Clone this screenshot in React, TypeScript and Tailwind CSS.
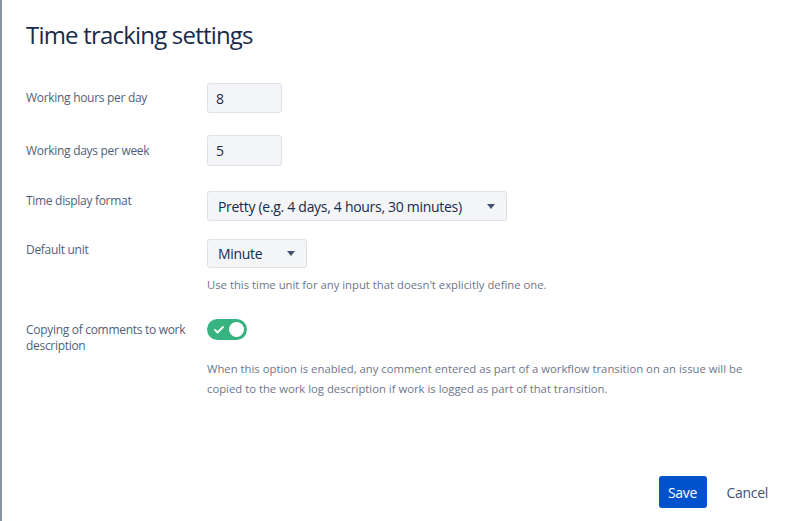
import { useState } from 'react';

const font = { fontFamily: '"Open Sans", "Noto Sans", sans-serif' };

function Caret() {
  return (
    <svg width="8" height="5" viewBox="0 0 8 5" className="shrink-0">
      <path d="M0 0h8L4 5z" fill="#42526e" />
    </svg>
  );
}

export default function App() {
  const [copyComments, setCopyComments] = useState(true);

  return (
    <div className="w-[801px] h-[521px] flex bg-[#8993a4] overflow-hidden" style={font}>
      <div className="ml-[2px] flex-1 bg-white flex flex-col pl-6 pr-[21px]">
        <h1 className="mt-[19px] text-[24px] leading-[32px] tracking-[-0.8px] text-[#172b4d]">Time tracking settings</h1>

        {/* working hours */}
        <div className="mt-[32px] flex">
          <div className="w-[181px] flex items-center text-[12px] leading-4 tracking-[-0.3px] text-[#505f79]">Working hours per day</div>
          <div className="w-[75px] h-[30px] rounded-[3px] border border-[#dfe1e6] bg-[#f4f5f7] px-2 flex items-center text-[14px] text-[#172b4d]">8</div>
        </div>

        {/* working days */}
        <div className="mt-[22px] flex">
          <div className="w-[181px] flex items-center text-[12px] leading-4 tracking-[-0.3px] text-[#505f79]">Working days per week</div>
          <div className="w-[75px] h-[31px] rounded-[3px] border border-[#dfe1e6] bg-[#f4f5f7] px-2 flex items-center text-[14px] text-[#172b4d]">5</div>
        </div>

        {/* display format */}
        <div className="mt-[25px] flex">
          <div className="w-[181px] pt-[2px] text-[12px] leading-4 tracking-[-0.3px] text-[#505f79]">Time display format</div>
          <div className="w-[300px] h-[30px] rounded-[3px] border border-[#dfe1e6] bg-[#f4f5f7] pl-[10px] pr-[11px] flex items-center justify-between text-[14px] tracking-[-0.3px] text-[#172b4d]">
            <span>Pretty (e.g. 4 days, 4 hours, 30 minutes)</span>
            <Caret />
          </div>
        </div>

        {/* default unit */}
        <div className="mt-[18px] flex">
          <div className="w-[181px] pt-[3px] text-[12px] leading-4 tracking-[-0.3px] text-[#505f79]">Default unit</div>
          <div className="flex flex-col">
            <div className="w-[100px] h-[29px] rounded-[3px] border border-[#dfe1e6] bg-[#f4f5f7] pl-[10px] pr-[11px] flex items-center justify-between text-[14px] tracking-[-0.3px] text-[#172b4d]">
              <span>Minute</span>
              <Caret />
            </div>
            <p className="mt-[9px] text-[11.3px] leading-4 text-[#6b778c]">Use this time unit for any input that doesn't explicitly define one.</p>
          </div>
        </div>

        {/* copy comments */}
        <div className="mt-[26px] flex">
          <div className="w-[181px] pt-[3px] text-[12px] leading-4 tracking-[-0.3px] text-[#505f79]">Copying of comments to work description</div>
          <div className="flex flex-col">
            <button
              onClick={() => setCopyComments(!copyComments)}
              className={`w-[40px] h-[21px] rounded-full p-[3px] flex items-center ${copyComments ? 'bg-[#36b37e] justify-end' : 'bg-[#a5adba] justify-start'} relative`}
            >
              {copyComments && (
                <svg width="10" height="8" viewBox="0 0 10 8" className="absolute left-[7px] top-[7px]">
                  <path d="M1 4l2.5 2.5L9 1" stroke="white" strokeWidth="1.8" fill="none" strokeLinecap="round" strokeLinejoin="round" />
                </svg>
              )}
              <span className="w-[15px] h-[15px] rounded-full bg-white" />
            </button>
            <p className="mt-[19px] w-[555px] text-[11.3px] leading-5 text-[#6b778c]">
              When this option is enabled, any comment entered as part of a workflow transition on an issue will be copied to the work log description if work is logged as part of that transition.
            </p>
          </div>
        </div>

        <div className="mt-auto mb-[13px] flex justify-end items-center gap-[8px]">
          <button className="h-[32px] w-[48px] rounded-[3px] bg-[#0052cc] text-white text-[14px] tracking-[-0.3px]">Save</button>
          <button className="h-[32px] px-[12px] text-[#42526e] text-[14px] tracking-[-0.3px]">Cancel</button>
        </div>
      </div>
    </div>
  );
}
